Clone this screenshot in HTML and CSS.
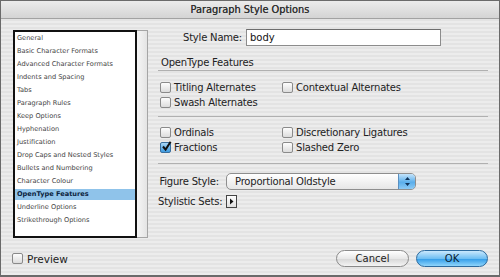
FILE: index.html
```html
<!DOCTYPE html>
<html>
<head>
    <title>Paragraph Style Options</title>
    <link rel="stylesheet" href="styles.css">
</head>
<body>
    <div class="window">
        <div class="titlebar">Paragraph Style Options</div>
        <div class="content">
            <div class="main">
                <div class="sidebar">
                    <ul class="section-list">
                        <li>General</li>
                        <li>Basic Character Formats</li>
                        <li>Advanced Character Formats</li>
                        <li>Indents and Spacing</li>
                        <li>Tabs</li>
                        <li>Paragraph Rules</li>
                        <li>Keep Options</li>
                        <li>Hyphenation</li>
                        <li>Justification</li>
                        <li>Drop Caps and Nested Styles</li>
                        <li>Bullets and Numbering</li>
                        <li>Character Colour</li>
                        <li class="selected">OpenType Features</li>
                        <li>Underline Options</li>
                        <li>Strikethrough Options</li>
                    </ul>
                    <div class="scroll-track"></div>
                </div>

                <div class="panel">
                    <div class="name-row">
                        <label for="style-name">Style Name:</label>
                        <input id="style-name" class="text-field" type="text" value="body">
                    </div>

                    <div class="group-title">OpenType Features</div>

                    <div class="check-group">
                        <label class="check"><span class="box"></span>Titling Alternates</label>
                        <label class="check"><span class="box"></span>Contextual Alternates</label>
                        <label class="check"><span class="box"></span>Swash Alternates</label>
                    </div>

                    <div class="check-group">
                        <label class="check"><span class="box"></span>Ordinals</label>
                        <label class="check"><span class="box"></span>Discretionary Ligatures</label>
                        <label class="check"><span class="box checked">
                            <svg width="11" height="11" viewBox="0 0 11 11"><path d="M2 5.5 L4.6 8.6 L9.6 0.8" fill="none" stroke="#111" stroke-width="2"/></svg>
                        </span>Fractions</label>
                        <label class="check"><span class="box"></span>Slashed Zero</label>
                    </div>

                    <div class="field-row">
                        <span class="field-label">Figure Style:</span>
                        <div class="popup">
                            <span class="popup-value">Proportional Oldstyle</span>
                            <span class="popup-arrows">
                                <svg width="7" height="11" viewBox="0 0 7 11"><path d="M3.5 1 L6 4 L1 4 Z M3.5 10 L6 7 L1 7 Z" fill="#10335a"/></svg>
                            </span>
                        </div>
                    </div>
                    <div class="field-row sets-row">
                        <span class="field-label">Stylistic Sets:</span>
                        <span class="disclosure">
                            <svg width="5" height="7" viewBox="0 0 5 7"><path d="M1 0.5 L4.5 3.5 L1 6.5 Z" fill="#111"/></svg>
                        </span>
                    </div>
                </div>
            </div>

            <div class="footer">
                <label class="check preview"><span class="box"></span>Preview</label>
                <div class="buttons">
                    <button class="btn">Cancel</button>
                    <button class="btn default">OK</button>
                </div>
            </div>
        </div>
    </div>
</body>
</html>
```

FILE: styles.css
```css
body {
    margin: 0;
    font-family: "DejaVu Sans", Verdana, sans-serif;
    color: #1a1a1a;
}
.window {
    width: 500px;
    height: 277px;
    box-sizing: border-box;
    border: 1px solid #6a6a6a;
    border-bottom-width: 2px;
    background: repeating-linear-gradient(to bottom, #ececec 0, #ececec 2px, #e3e3e3 2px, #e3e3e3 4px);
    overflow: hidden;
}
.titlebar {
    height: 17px;
    line-height: 17px;
    border-bottom: 1px solid #a2a2a2;
    background: linear-gradient(to bottom, #ebebeb, #d4d4d4);
    text-align: center;
    font-size: 9.8px;
    color: #333;
    text-shadow: 0 0 0.2px #333;
}
.content {
    padding: 11px 11px 0 12px;
}
.main {
    display: flex;
    gap: 10px;
}
.sidebar {
    display: flex;
    height: 208px;
}
.section-list {
    list-style: none;
    margin: 0;
    padding: 1px 0 0 0;
    width: 120px;
    box-sizing: content-box;
    height: 203px;
    border: 2px solid #111;
    background: #fff;
}
.section-list li {
    height: 11px;
    line-height: 11px;
    margin-bottom: 2px;
    padding-left: 2px;
    font-size: 6.6px;
    color: #444;
    white-space: nowrap;
}
.section-list li.selected {
    background: #8fc3ea;
    color: #0d2440;
    font-weight: bold;
}
.scroll-track {
    width: 10px;
    border: 1px solid #a5a5a5;
    border-left: none;
    background: linear-gradient(to right, #f6f6f6, #e4e4e4);
}
.panel {
    width: 330px;
    font-size: 10px;
    letter-spacing: -0.2px;
    color: #222;
}
.name-row {
    display: flex;
    align-items: center;
    gap: 4px;
    padding-left: 25px;
    height: 17px;
    margin-top: -1px;
}
.text-field {
    width: 195px;
    height: 17px;
    box-sizing: border-box;
    border: 1px solid #8c8c8c;
    border-top-color: #6e6e6e;
    padding: 0 3px;
    font: inherit;
    color: #111;
    background: #fff;
    outline: none;
}
.group-title {
    margin-top: 11px;
    height: 12px;
    line-height: 12px;
    padding-left: 3px;
    border-bottom: 1px solid #b0b0b0;
    padding-bottom: 1px;
}
.check-group {
    display: grid;
    grid-template-columns: 122px 1fr;
    grid-auto-rows: 15px;
    padding: 9px 0 6px 2px;
    border-bottom: 1px solid #b0b0b0;
}
.check-group + .check-group {
    padding-top: 8px;
    padding-bottom: 8px;
}
.check {
    display: flex;
    align-items: center;
    gap: 3px;
    white-space: nowrap;
}
.box {
    width: 11px;
    height: 11px;
    box-sizing: border-box;
    border: 1px solid #8a8a8a;
    border-radius: 2px;
    background: linear-gradient(to bottom, #fdfdfd, #dcdcdc);
    flex: none;
    position: relative;
}
.box.checked {
    border-color: #3a6f9e;
    background: linear-gradient(to bottom, #a9d8f8, #3d9ae0);
}
.box.checked svg {
    position: absolute;
    left: 0;
    top: -2px;
}
.field-row {
    display: flex;
    align-items: center;
    gap: 7px;
    margin-top: 9px;
    height: 17px;
}
.sets-row {
    margin-top: 5px;
    height: 13px;
}
.field-label {
    width: 61px;
    text-align: right;
    white-space: nowrap;
}
.popup {
    width: 190px;
    height: 17px;
    box-sizing: border-box;
    border: 1px solid #8e8e8e;
    border-radius: 5px;
    background: linear-gradient(to bottom, #ffffff, #e6e6e6);
    display: flex;
    overflow: hidden;
}
.popup-value {
    flex: 1;
    line-height: 15px;
    padding-left: 8px;
}
.popup-arrows {
    width: 16px;
    display: flex;
    align-items: center;
    justify-content: center;
    border-left: 1px solid #5a8fc0;
    background: linear-gradient(to bottom, #c4e4fb, #5aaeeb 55%, #8ccaf5);
}
.disclosure {
    width: 11px;
    height: 13px;
    box-sizing: border-box;
    border: 1px solid #444;
    background: linear-gradient(to bottom, #fdfdfd, #e0e0e0);
    display: flex;
    align-items: center;
    justify-content: center;
}
.footer {
    display: flex;
    justify-content: space-between;
    align-items: center;
    margin-top: 12px;
    height: 17px;
    font-size: 10px;
    color: #222;
}
.preview {
    margin-left: -1px;
    gap: 4px;
    font-size: 10.5px;
}
.buttons {
    display: flex;
    gap: 7px;
}
.btn {
    width: 73px;
    height: 17px;
    border: 1px solid #8a8a8a;
    border-radius: 9px;
    background: linear-gradient(to bottom, #ffffff, #e8e8e8 50%, #d6d6d6 51%, #f4f4f4);
    font-family: "DejaVu Sans", Verdana, sans-serif;
    font-size: 10px;
    color: #222;
    padding: 0;
}
.btn.default {
    width: 72px;
    border-color: #2c6a9e;
    background: linear-gradient(to bottom, #c9e8fd, #6fbff3 50%, #2f9ae8 51%, #8fd5fb);
    color: #0a1d33;
}
```
